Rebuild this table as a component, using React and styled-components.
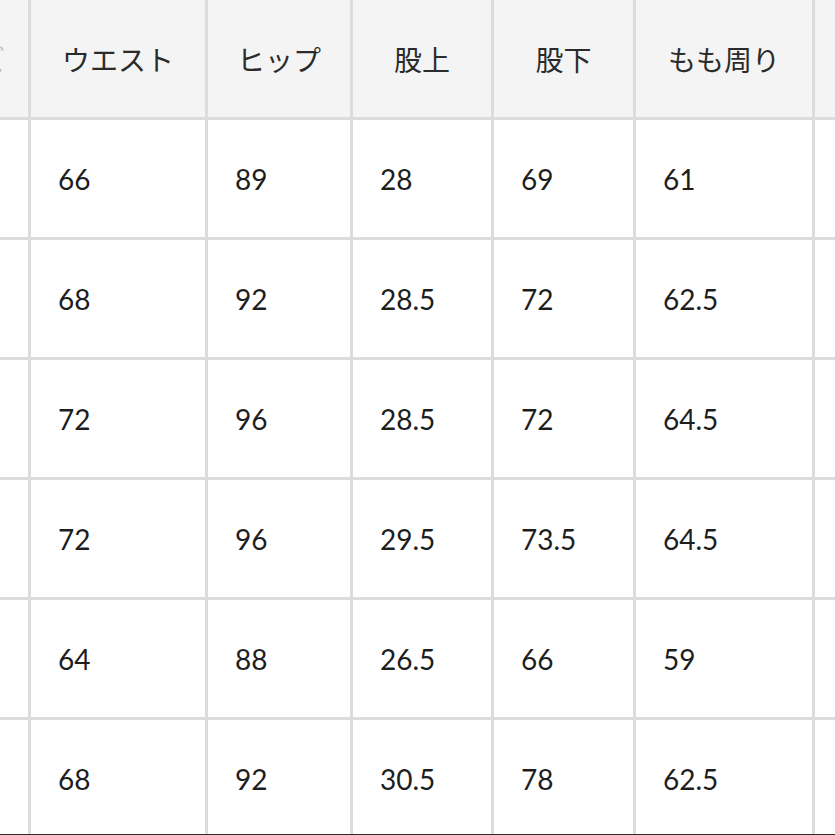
import React from "react";
import styled, { createGlobalStyle } from "styled-components";

const GlobalStyle = createGlobalStyle`
  html, body {
    margin: 0;
    padding: 0;
    background: #ffffff;
  }
  body {
    font-family: Lato, "Noto Sans CJK JP", sans-serif;
  }
`;

const Frame = styled.div`
  width: 835px;
  height: 835px;
  overflow: hidden;
  box-sizing: border-box;
  border-bottom: 1px solid #2a2a2a;
`;

const Grid = styled.div`
  display: grid;
  grid-template-columns: 28px 174px 142px 138px 139px 176px 40px;
  grid-auto-rows: 117px;
  gap: 3px;
  background: #dcdcdc;
  width: max-content;
`;

const Cell = styled.div`
  display: flex;
  align-items: center;
  justify-content: ${(p) => (p.$head ? "center" : "flex-start")};
  padding-left: ${(p) => (p.$head ? "0" : "27px")};
  background: ${(p) => (p.$head ? "#f4f4f4" : "#ffffff")};
  color: ${(p) => (p.$head ? "#2b2b2b" : "#1e1e1e")};
  font-family: ${(p) =>
    p.$head ? '"Noto Sans CJK JP", sans-serif' : 'Lato, "Noto Sans CJK JP", sans-serif'};
  font-size: 28px;
  white-space: nowrap;
  overflow: hidden;
  box-sizing: border-box;
`;

const EdgeCell = styled(Cell)`
  justify-content: flex-end;
  padding-left: 0;
  padding-right: 23px;
  color: #b8b8b8;
`;

const headers = ["ウエスト", "ヒップ", "股上", "股下", "もも周り"];

const rows = [
  ["66", "89", "28", "69", "61"],
  ["68", "92", "28.5", "72", "62.5"],
  ["72", "96", "28.5", "72", "64.5"],
  ["72", "96", "29.5", "73.5", "64.5"],
  ["64", "88", "26.5", "66", "59"],
  ["68", "92", "30.5", "78", "62.5"],
];

export default function App() {
  return (
    <>
      <GlobalStyle />
      <Frame>
        <Grid>
          <EdgeCell $head>サイズ</EdgeCell>
          {headers.map((h) => (
            <Cell $head key={h}>
              {h}
            </Cell>
          ))}
          <Cell $head />
          {rows.map((r, i) => (
            <React.Fragment key={i}>
              <Cell />
              {r.map((v, j) => (
                <Cell key={j}>{v}</Cell>
              ))}
              <Cell />
            </React.Fragment>
          ))}
        </Grid>
      </Frame>
    </>
  );
}
